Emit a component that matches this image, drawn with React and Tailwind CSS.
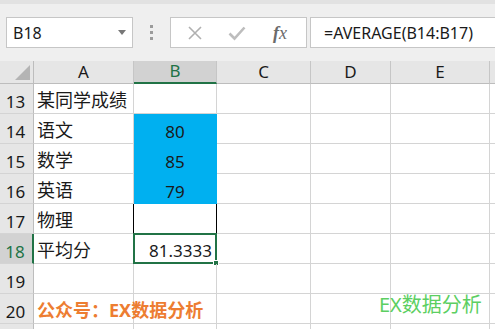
import React from "react";

const FONT = { fontFamily: '"Noto Sans", "Noto Sans CJK SC", sans-serif' };

const cols = [
  { key: "A", w: "w-[100px]" },
  { key: "B", w: "w-[83px]" },
  { key: "C", w: "w-[94px]" },
  { key: "D", w: "w-[80px]" },
  { key: "E", w: "w-[99px]" },
];

const rows = [
  { n: 13, a: "某同学成绩", b: "" },
  { n: 14, a: "语文", b: "80", blue: true },
  { n: 15, a: "数学", b: "85", blue: true },
  { n: 16, a: "英语", b: "79", blue: true },
  { n: 17, a: "物理", b: "", boxed: true },
  { n: 18, a: "平均分", b: "81.3333", sel: true },
  { n: 19, a: "", b: "" },
  { n: 20, a: "公众号：EX数据分析", b: "", orange: true },
  { n: "", a: "", b: "" },
];

function RowHeader({ n, sel }) {
  return (
    <div
      className={
        "w-[34px] h-full shrink-0 flex items-end justify-center pb-[1px] text-[17px] leading-none border-b border-[#d4d4d4] " +
        (sel
          ? "bg-[#d2d2d2] text-[#217346] border-r-2 border-r-[#217346]"
          : "bg-[#e6e6e6] text-[#1a1a1a] border-r border-r-[#bdbdbd]")
      }
    >
      <span className="pb-[2px] pr-[2px]">{n}</span>
    </div>
  );
}

export default function App() {
  return (
    <div className="w-[495px] h-[329px] overflow-hidden bg-[#efefef] relative" style={FONT}>
      <div className="h-[4px] bg-[#e2e2e2]" />
      {/* formula bar */}
      <div className="flex items-start pt-[13px] h-[57px]">
        <div className="ml-[6px] w-[127px] h-[31px] bg-white border border-[#c6c6c6] flex items-center justify-between pl-[6px] pr-[6px] shrink-0">
          <span className="text-[16px] text-[#1a1a1a] leading-none">B18</span>
          <div className="w-0 h-0 border-l-[4px] border-r-[4px] border-t-[5px] border-l-transparent border-r-transparent border-t-[#777]" />
        </div>
        <div className="w-[37px] h-[31px] flex flex-col items-center justify-center gap-[3px] shrink-0">
          <div className="w-[3px] h-[3px] bg-[#9b9b9b]" />
          <div className="w-[3px] h-[3px] bg-[#9b9b9b]" />
          <div className="w-[3px] h-[3px] bg-[#9b9b9b]" />
        </div>
        <div className="w-[137px] h-[31px] bg-white border border-[#c6c6c6] flex items-center shrink-0">
          <div className="w-[46px] flex justify-center pl-[2px]">
            <svg width="16" height="16" viewBox="0 0 16 16">
              <path d="M2 2 L14 14 M14 2 L2 14" stroke="#b0b0b0" strokeWidth="1.6" fill="none" />
            </svg>
          </div>
          <div className="w-[40px] flex justify-center">
            <svg width="18" height="16" viewBox="0 0 18 16">
              <path d="M1.5 8.5 L6.5 13.5 L16.5 2.5" stroke="#bdbdbd" strokeWidth="2.6" fill="none" />
            </svg>
          </div>
          <div className="w-[46px] flex justify-center">
            <span
              className="text-[18px] italic text-[#6b6b6b] leading-none"
              style={{ fontFamily: '"Liberation Serif", "DejaVu Serif", serif' }}
            >
              <span className="font-bold">f</span>x
            </span>
          </div>
        </div>
        <div className="ml-[3px] flex-1 h-[31px] bg-white border border-[#c6c6c6] border-r-0 flex items-center pl-[13px]">
          <span className="text-[16px] text-[#1a1a1a] leading-none">=AVERAGE(B14:B17)</span>
        </div>
      </div>

      {/* column header */}
      <div className="flex h-[23px]">
        <div className="w-[34px] shrink-0 bg-[#e6e6e6] border-r border-[#bdbdbd] border-b border-b-[#bdbdbd] relative">
          <svg className="absolute right-[3px] bottom-[3px]" width="15" height="15" viewBox="0 0 15 15">
            <polygon points="15,0 15,15 0,15" fill="#b4b4b4" />
          </svg>
        </div>
        {cols.map((c) => (
          <div
            key={c.key}
            className={
              c.w +
              " shrink-0 flex items-end justify-center text-[17px] leading-none pb-[2px] border-r border-r-[#c6c6c6] " +
              (c.key === "B"
                ? "bg-[#d2d2d2] text-[#217346] border-b-2 border-b-[#217346]"
                : "bg-[#e6e6e6] text-[#1a1a1a] border-b border-b-[#bdbdbd]")
            }
          >
            <span className="pb-[1px]">{c.key}</span>
          </div>
        ))}
        <div className="flex-1 bg-[#e6e6e6] border-b border-b-[#bdbdbd]" />
      </div>

      {/* rows */}
      <div className="bg-white">
        {rows.map((r, i) => (
          <div key={i} className="flex h-[30px]">
            <RowHeader n={r.n} sel={r.sel} />
            {/* A */}
            <div className="w-[100px] shrink-0 border-r border-b border-[#d4d4d4] flex items-end pl-[3px] pb-[4px] leading-none overflow-visible">
              <span
                className={
                  r.orange
                    ? "text-[18px] font-bold text-[#ed7d31] whitespace-nowrap relative z-10"
                    : "text-[18px] text-[#1a1a1a] whitespace-nowrap"
                }
              >
                {r.a}
              </span>
            </div>
            {/* B */}
            <div
              className={
                "w-[83px] shrink-0 flex items-end leading-none text-[17px] text-[#1a1a1a] relative " +
                (r.blue
                  ? "bg-[#00b0f0] justify-center pb-[4px] border-r border-r-[#00b0f0]"
                  : r.boxed
                  ? "border-l border-r border-b border-black -ml-[1px] w-[84px] justify-center"
                  : "border-r border-b border-[#d4d4d4] justify-end pr-[4px] pb-[4px]")
              }
            >
              {r.b}
              {r.sel && (
                <>
                  <div className="absolute -left-[1px] -top-[1px] -right-[1px] -bottom-[1px] border-2 border-[#217346]" />
                  <div className="absolute -right-[3px] -bottom-[3px] w-[6px] h-[6px] bg-[#217346] border border-white" />
                </>
              )}
            </div>
            {/* C D E */}
            <div className="w-[94px] shrink-0 border-r border-b border-[#d4d4d4]" />
            <div className="w-[80px] shrink-0 border-r border-b border-[#d4d4d4]" />
            <div className="w-[99px] shrink-0 border-r border-b border-[#d4d4d4]" />
            <div className="flex-1 border-b border-[#d4d4d4]" />
          </div>
        ))}
      </div>

      {/* watermark */}
      <div className="absolute left-[379px] top-[295px] text-[20px] text-[#5ccf62] leading-none whitespace-nowrap">
        EX数据分析
      </div>
    </div>
  );
}
